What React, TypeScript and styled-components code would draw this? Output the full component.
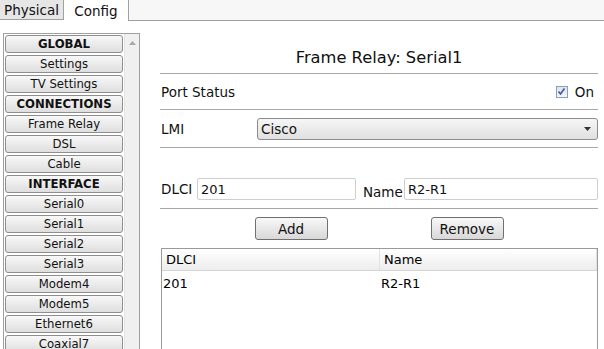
import React from 'react';
import styled, { createGlobalStyle } from 'styled-components';

const GlobalStyle = createGlobalStyle`
  html, body {
    margin: 0;
    padding: 0;
    background: #ffffff;
    font-family: 'DejaVu Sans', Tahoma, sans-serif;
    color: #000;
  }
`;

const Page = styled.div`
  width: 604px;
  height: 349px;
  overflow: hidden;
  display: flex;
  flex-direction: column;
`;

const TabBar = styled.div`
  display: flex;
  height: 21px;
  background: #ffffff;
`;

const Tab = styled.div<{ $active?: boolean }>`
  width: ${(p) => (p.$active ? '65px' : '64px')};
  height: ${(p) => (p.$active ? '21px' : '20px')};
  box-sizing: border-box;
  display: flex;
  align-items: center;
  justify-content: center;
  font-size: 13.5px;
  color: #111;
  background: ${(p) => (p.$active ? '#ffffff' : '#e6e6e6')};
  border-right: 1px solid #a0a0a0;
  border-bottom: ${(p) => (p.$active ? 'none' : '1px solid #a0a0a0')};
`;

const TabFill = styled.div`
  flex: 1;
  height: 21px;
  background: #f7f7f7;
  border-bottom: 1px solid #a0a0a0;
  box-sizing: border-box;
`;

const Body = styled.div`
  flex: 1;
  display: flex;
  padding: 12px 6px 0 3px;
  gap: 20px;
  min-height: 0;
`;

const Sidebar = styled.div`
  width: 137px;
  box-sizing: border-box;
  border: 1px solid #a0a0a0;
  border-bottom: none;
  display: flex;
  overflow: hidden;
`;

const NavList = styled.div`
  flex: 1;
  display: flex;
  flex-direction: column;
  gap: 2px;
  padding: 1px 1px 0 1px;
`;

const NavButton = styled.div<{ $header?: boolean }>`
  height: 18px;
  flex-shrink: 0;
  box-sizing: border-box;
  border: 1px solid #8e8e8e;
  border-radius: 3px;
  background: linear-gradient(#f8f8f8, #dedede);
  display: flex;
  align-items: center;
  justify-content: center;
  font-size: 11.7px;
  font-weight: ${(p) => (p.$header ? 700 : 400)};
  color: #111;
`;

const ScrollTrack = styled.div`
  width: 15px;
  background: #f0f0f0;
  border-left: 1px solid #e4e4e4;
  display: flex;
  justify-content: center;
  padding-top: 7px;
  box-sizing: border-box;
`;

const Main = styled.div`
  flex: 1;
  display: flex;
  flex-direction: column;
`;

const Title = styled.div`
  height: 40px;
  box-sizing: border-box;
  padding-top: 8px;
  display: flex;
  align-items: center;
  justify-content: center;
  font-size: 16.3px;
  color: #111;
`;

const Row = styled.div<{ $h: number; $line?: boolean }>`
  height: ${(p) => p.$h}px;
  box-sizing: border-box;
  display: flex;
  align-items: center;
  border-top: ${(p) => (p.$line ? '1px solid #a8a8a8' : 'none')};
  font-size: 13.5px;
  color: #111;
`;

const Label = styled.span<{ $w?: number; $pad?: number; $drop?: number }>`
  width: ${(p) => (p.$w ? `${p.$w}px` : 'auto')};
  box-sizing: border-box;
  padding-left: ${(p) => p.$pad ?? 1}px;
  padding-top: ${(p) => p.$drop ?? 0}px;
  flex-shrink: 0;
`;

const Spacer = styled.div`
  flex: 1;
`;

const CheckBox = styled.span`
  width: 12px;
  height: 12px;
  box-sizing: border-box;
  border: 1px solid #8aa0b8;
  background: linear-gradient(#dde4ec, #f4f6f8);
  display: inline-flex;
  align-items: center;
  justify-content: center;
  margin-right: 7px;
`;

const Select = styled.div`
  flex: 1;
  height: 22px;
  box-sizing: border-box;
  border: 1px solid #8c8c8c;
  border-radius: 3px;
  background: linear-gradient(#f6f6f6, #e0e0e0);
  display: flex;
  align-items: center;
  padding: 0 6px 0 3px;
`;

const Input = styled.div<{ $w: number }>`
  width: ${(p) => p.$w}px;
  height: 22px;
  box-sizing: border-box;
  border: 1px solid #cfcfcf;
  border-radius: 2px;
  background: #fff;
  display: flex;
  align-items: center;
  padding-left: 3px;
  font-size: 13px;
`;

const ButtonRow = styled.div`
  height: 40px;
  box-sizing: border-box;
  border-top: 1px solid #a8a8a8;
  display: flex;
  align-items: center;
  justify-content: center;
  gap: 103px;
`;

const Button = styled.div`
  width: 73px;
  height: 23px;
  box-sizing: border-box;
  border: 1px solid #707070;
  border-radius: 3px;
  background: linear-gradient(#f8f8f8, #d8d8d8);
  display: flex;
  align-items: center;
  justify-content: center;
  font-size: 13.5px;
  color: #111;
`;

const Table = styled.div`
  flex: 1;
  margin-left: 1px;
  border: 1px solid #9a9a9a;
  border-bottom: none;
  display: flex;
  flex-direction: column;
`;

const HeadRow = styled.div`
  height: 22px;
  box-sizing: border-box;
  display: grid;
  grid-template-columns: 218px 1fr;
  background: linear-gradient(#ffffff, #ededed);
  border-bottom: 1px solid #d4d4d4;
  font-size: 13px;
`;

const HeadCell = styled.div`
  display: flex;
  align-items: center;
  padding-left: 4px;
  border-right: 1px solid #e2e2e2;
`;

const DataRow = styled.div`
  height: 24px;
  display: grid;
  grid-template-columns: 218px 1fr;
  align-items: center;
  font-size: 13px;
`;

const Cell = styled.div`
  padding-left: 1px;
`;

const navItems: { label: string; header?: boolean }[] = [
  { label: 'GLOBAL', header: true },
  { label: 'Settings' },
  { label: 'TV Settings' },
  { label: 'CONNECTIONS', header: true },
  { label: 'Frame Relay' },
  { label: 'DSL' },
  { label: 'Cable' },
  { label: 'INTERFACE', header: true },
  { label: 'Serial0' },
  { label: 'Serial1' },
  { label: 'Serial2' },
  { label: 'Serial3' },
  { label: 'Modem4' },
  { label: 'Modem5' },
  { label: 'Ethernet6' },
  { label: 'Coaxial7' },
];

export default function App() {
  return (
    <Page>
      <GlobalStyle />
      <TabBar>
        <Tab>Physical</Tab>
        <Tab $active>Config</Tab>
        <TabFill />
      </TabBar>
      <Body>
        <Sidebar>
          <NavList>
            {navItems.map((n) => (
              <NavButton key={n.label} $header={n.header}>
                {n.label}
              </NavButton>
            ))}
          </NavList>
          <ScrollTrack>
            <svg width="7" height="4" viewBox="0 0 7 4">
              <path d="M0 4 L3.5 0 L7 4 Z" fill="#a8a8a8" />
            </svg>
          </ScrollTrack>
        </Sidebar>
        <Main>
          <Title>Frame Relay: Serial1</Title>
          <Row $h={36} $line>
            <Label>Port Status</Label>
            <Spacer />
            <CheckBox>
              <svg width="9" height="9" viewBox="0 0 9 9">
                <path d="M1.5 4.5 L3.5 7 L7.5 1.5" fill="none" stroke="#3a5a9a" strokeWidth="1.6" />
              </svg>
            </CheckBox>
            <span style={{ marginRight: 4 }}>On</span>
          </Row>
          <Row $h={38} $line>
            <Label $w={97}>LMI</Label>
            <Select>
              <span>Cisco</span>
              <Spacer />
              <svg width="7" height="4" viewBox="0 0 7 4">
                <path d="M0 0 L7 0 L3.5 4 Z" fill="#333" />
              </svg>
            </Select>
          </Row>
          <Row $h={23} $line />
          <Row $h={38}>
            <Label $w={37}>DLCI</Label>
            <Input $w={159}>201</Input>
            <Label $w={48} $pad={7} $drop={6}>
              Name
            </Label>
            <Input $w={194}>R2-R1</Input>
          </Row>
          <ButtonRow>
            <Button>Add</Button>
            <Button>Remove</Button>
          </ButtonRow>
          <Table>
            <HeadRow>
              <HeadCell>DLCI</HeadCell>
              <HeadCell>Name</HeadCell>
            </HeadRow>
            <DataRow>
              <Cell>201</Cell>
              <Cell>R2-R1</Cell>
            </DataRow>
          </Table>
        </Main>
      </Body>
    </Page>
  );
}
